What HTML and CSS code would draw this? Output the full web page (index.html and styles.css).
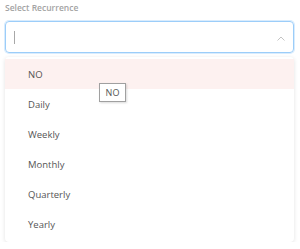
FILE: index.html
```html
<!DOCTYPE html>
<html lang="en">
<head>
    <meta charset="UTF-8">
    <title>Select Recurrence</title>
    <link rel="stylesheet" href="styles.css">
</head>
<body>
    <div class="field">
        <label class="field-label">Select Recurrence</label>

        <div class="select-box">
            <span class="caret"></span>
            <svg class="chevron" width="8" height="5" viewBox="0 0 8 5">
                <path d="M0.5 4.5 L4 1 L7.5 4.5" fill="none" stroke="#c4c4c4" stroke-width="1"/>
            </svg>
        </div>

        <ul class="options">
            <li class="option active">NO</li>
            <li class="option">Daily</li>
            <li class="option">Weekly</li>
            <li class="option">Monthly</li>
            <li class="option">Quarterly</li>
            <li class="option">Yearly</li>
        </ul>

        <div class="tooltip">NO</div>
    </div>
</body>
</html>
```

FILE: styles.css
```css
body {
    margin: 0;
    padding: 0 6px 0 5px;
    background-color: #fff;
    font-family: "Open Sans", "Noto Sans", sans-serif;
}
.field {
    position: relative;
}
.field-label {
    display: block;
    height: 14px;
    line-height: 15px;
    margin-bottom: 7px;
    font-size: 8.5px;
    font-weight: 600;
    color: #a3a3a3;
}
.select-box {
    display: flex;
    align-items: center;
    justify-content: space-between;
    height: 30px;
    padding: 0 8px 0 8px;
    border: 1px solid #9ccdf9;
    border-radius: 4px;
    box-shadow: 0 0 0 1px #d9ecfd;
}
.caret {
    width: 1px;
    height: 13px;
    background-color: #a8a8a8;
}
.chevron {
    margin-top: 2px;
}
.options {
    list-style: none;
    margin: 4px 0 0 0;
    padding: 2px 0 3px 0;
    border-radius: 4px;
    background-color: #fff;
    box-shadow: 0 1px 4px rgba(0, 0, 0, 0.12);
}
.option {
    height: 30px;
    line-height: 32px;
    padding-left: 23px;
    font-size: 9.5px;
    color: #555;
}
.option.active {
    background-color: #fdf1f0;
}
.tooltip {
    position: absolute;
    left: 94px;
    top: 83px;
    width: 25px;
    height: 17px;
    line-height: 17px;
    text-align: center;
    font-size: 9px;
    color: #555;
    background-color: #fff;
    border: 1px solid #a0a0a0;
    box-shadow: 1px 1px 2px rgba(0, 0, 0, 0.15);
}
```
